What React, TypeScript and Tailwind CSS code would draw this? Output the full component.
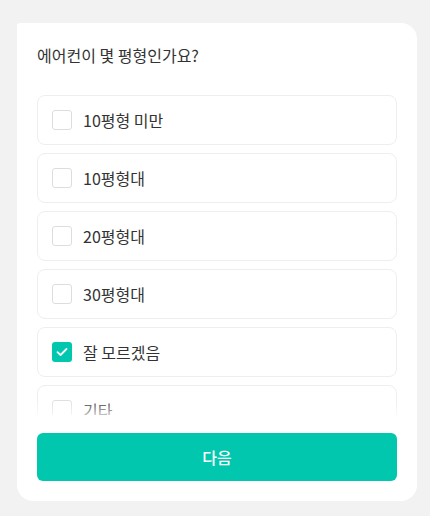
import React, { useState } from 'react';

const options = ['10평형 미만', '10평형대', '20평형대', '30평형대', '잘 모르겠음', '기타'];

const CheckBox: React.FC<{ checked: boolean }> = ({ checked }) => {
    if (checked) {
        return (
            <span className="flex h-5 w-5 shrink-0 items-center justify-center rounded-[3px] bg-[#00c7ae]">
                <svg width="12" height="10" viewBox="0 0 12 10" fill="none">
                    <path d="M1.5 5.2L4.5 8L10.5 2" stroke="white" strokeWidth="1.8" strokeLinecap="round" strokeLinejoin="round" />
                </svg>
            </span>
        );
    }
    return <span className="h-5 w-5 shrink-0 rounded-[3px] border border-[#dddddd] bg-white" />;
};

export default function App() {
    const [selected, setSelected] = useState(4);

    return (
        <div
            className="min-h-[516px] bg-[#f2f2f2] pt-[23px]"
            style={{ fontFamily: '"Noto Sans CJK KR", "Noto Sans", sans-serif' }}
        >
            <div className="mx-[17px] w-[400px] rounded-2xl rounded-tl-[3px] bg-white px-5 pb-5 pt-5">
                <h1 className="text-[16px] leading-6 text-[#333333]">에어컨이 몇 평형인가요?</h1>
                <div className="relative mt-7 h-[320px] overflow-hidden">
                    <div className="flex flex-col gap-2">
                        {options.map((opt, i) => (
                            <button
                                key={opt}
                                onClick={() => setSelected(i)}
                                className="flex h-[50px] items-center gap-[11px] rounded-lg border border-[#eeeeee] bg-white px-3.5 text-left"
                            >
                                <CheckBox checked={selected === i} />
                                <span className="text-[16px] text-[#333333]">{opt}</span>
                            </button>
                        ))}
                    </div>
                    <div className="pointer-events-none absolute bottom-0 left-0 right-0 h-4 bg-gradient-to-b from-white/0 to-white/70" />
                </div>
                <button className="mt-[18px] flex h-12 w-full items-center justify-center rounded-md bg-[#00c7ae] text-[16px] font-medium text-white">
                    다음
                </button>
            </div>
        </div>
    );
}
